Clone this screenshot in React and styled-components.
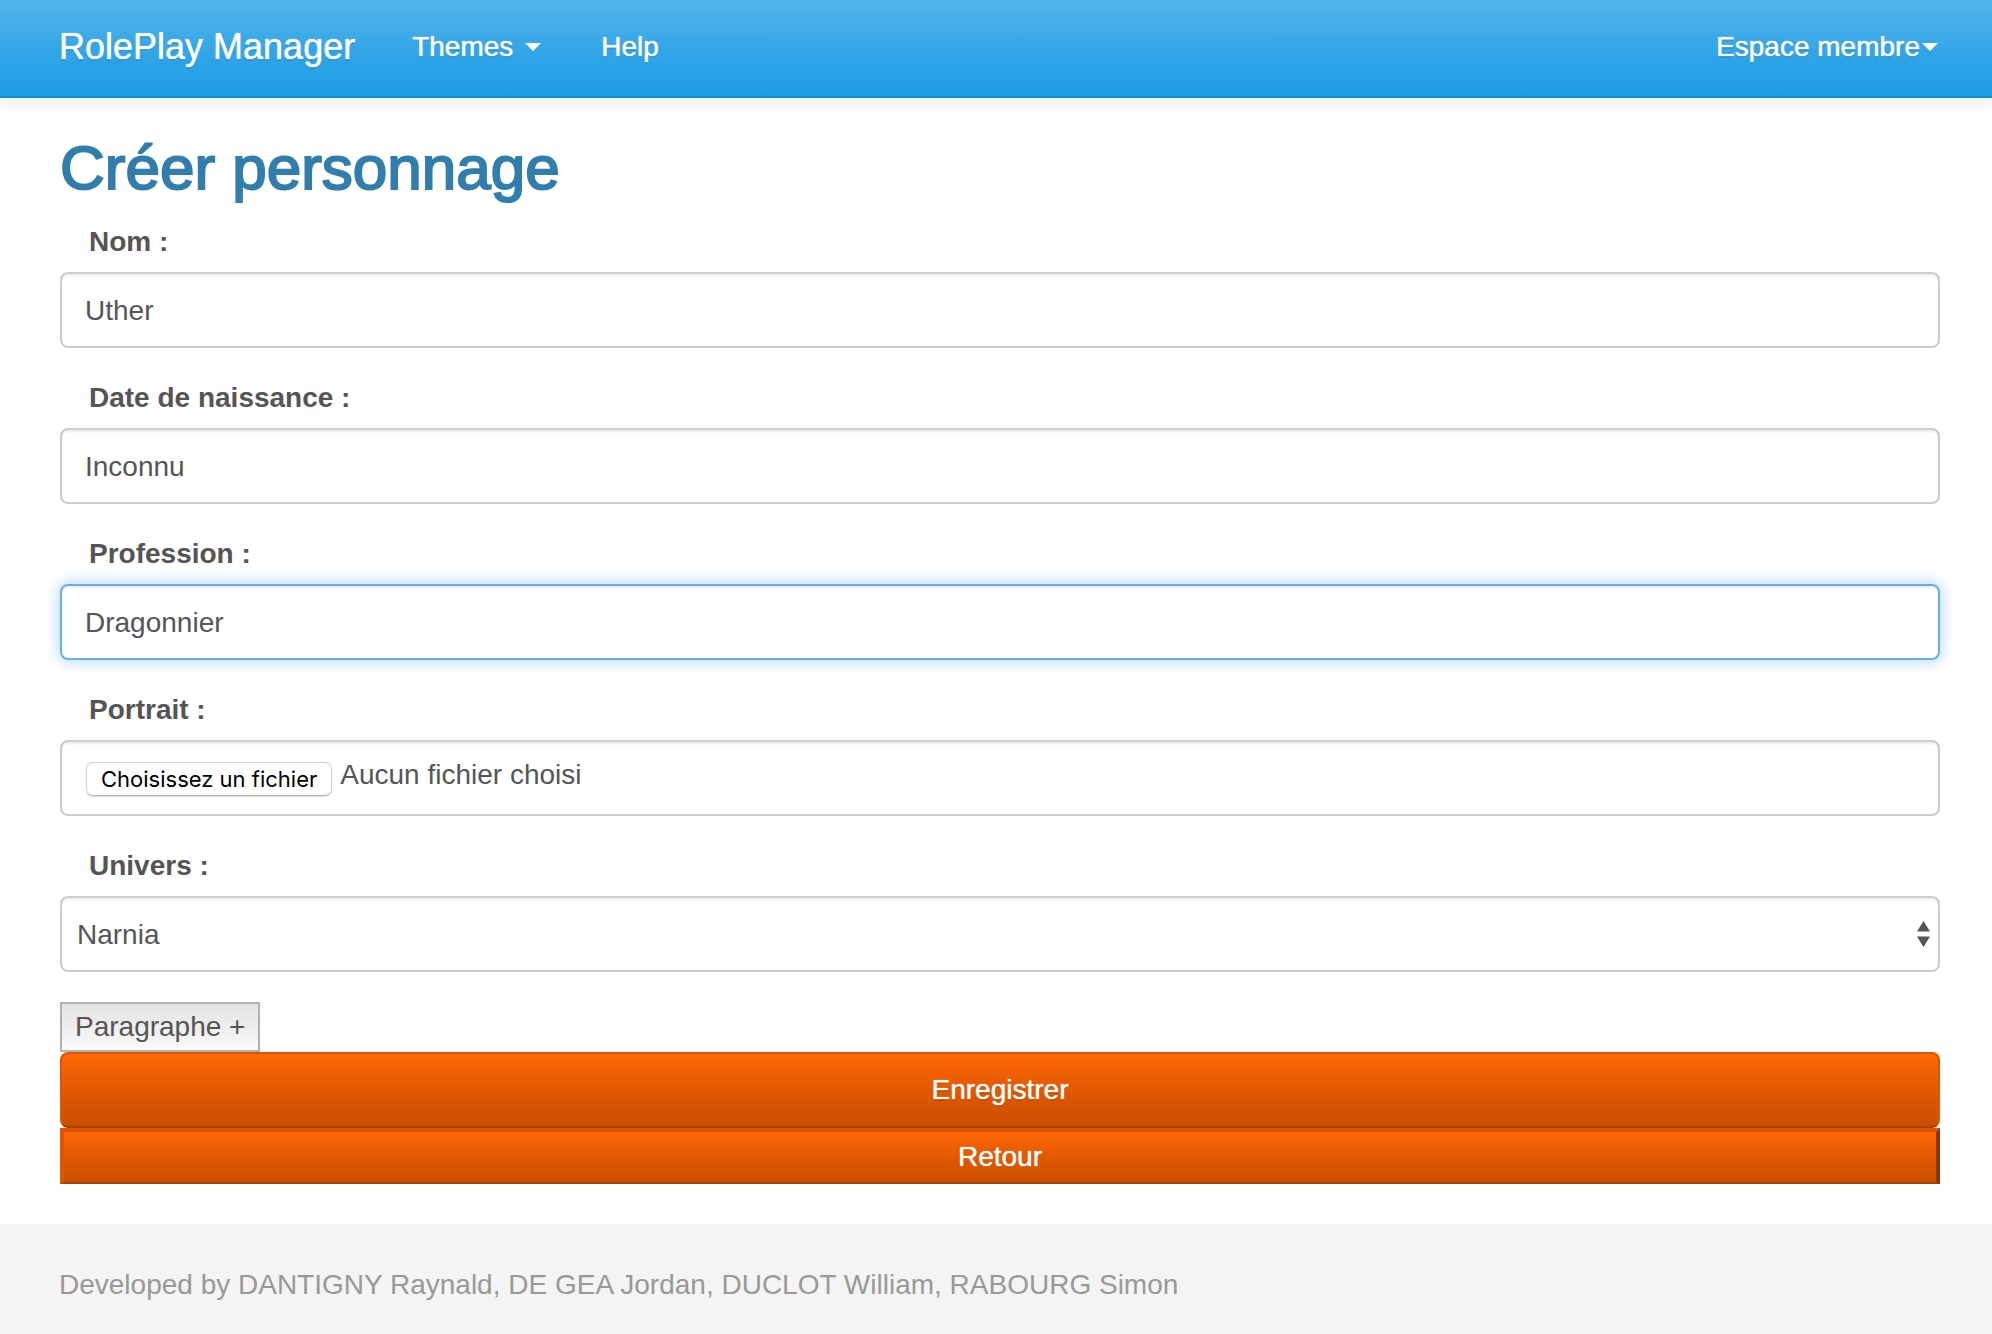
import React, { useState } from "react";
import styled, { createGlobalStyle, css } from "styled-components";

const GlobalStyle = createGlobalStyle`
  *, *::before, *::after { box-sizing: border-box; }
  body {
    margin: 0;
    background: #fff;
    color: #555;
    font: 28px/40px "Helvetica Neue", "Liberation Sans", Arial, sans-serif;
  }
  input, select, button { font: inherit; color: inherit; }
`;

const Page = styled.div`
  display: flex;
  flex-direction: column;
  min-height: 100vh;
`;

const Navbar = styled.nav`
  display: flex;
  align-items: center;
  height: 98px;
  padding: 0 54px 2px 59px;
  background-image: linear-gradient(#54b4eb, #2fa4e7 60%, #1d9ce5);
  border-bottom: 2px solid #178acc;
  box-shadow: 0 2px 20px rgba(0, 0, 0, 0.1);
`;

const Brand = styled.a`
  margin-right: 57px;
  color: #fff;
  font-size: 36px;
  text-decoration: none;
  text-shadow: 0 0 1px #fff, 0 2px 0 rgba(0, 0, 0, 0.1);
`;

const NavList = styled.ul`
  display: flex;
  flex: 1;
  gap: 60px;
  margin: 0;
  padding: 0;
  list-style: none;
`;

const NavItem = styled.li`
  margin-left: ${(p) => (p.$end ? "auto" : "0")};
`;

const NavLink = styled.a`
  display: flex;
  align-items: center;
  gap: ${(p) => p.$gap || 0}px;
  color: #fff;
  text-decoration: none;
  text-shadow: 0 0 1px #fff, 0 2px 0 rgba(0, 0, 0, 0.1);
`;

const Caret = styled.span`
  border: 8px solid transparent;
  border-top-color: #fff;
  border-bottom: 0;
`;

const Main = styled.main`
  padding: 30px 52px 40px 60px;
`;

const Title = styled.h1`
  margin: 0 0 14px;
  color: #317eac;
  font-size: 62px;
  font-weight: 400;
  line-height: 80px;
  -webkit-text-stroke: 2px #317eac;
`;

const Field = styled.div`
  margin-bottom: 30px;
`;

const Label = styled.label`
  display: block;
  margin-bottom: 10px;
  padding-left: 29px;
  font-weight: 700;
`;

const control = css`
  display: block;
  width: 100%;
  height: 76px;
  padding: 2px 23px 0;
  border: 2px solid #ccc;
  border-radius: 8px;
  outline: 0;
  background: #fff;
  box-shadow: inset 0 2px 2px rgba(0, 0, 0, 0.075);
`;

const focused = css`
  border-color: #66afe9;
  box-shadow: inset 0 2px 2px rgba(0, 0, 0, 0.075), 0 0 16px rgba(102, 175, 233, 0.6);
`;

const TextInput = styled.input`
  ${control}
  ${(p) => p.$active && focused}
  &:focus { ${focused} }
`;

const FileControl = styled.div`
  ${control}
  display: flex;
  align-items: flex-start;
  gap: 8px;
  padding: 13px 24px;
  &:focus-within { ${focused} }
`;

const FileInput = styled.input`
  position: absolute;
  width: 1px;
  height: 1px;
  opacity: 0;
`;

const FileButton = styled.label`
  margin-top: 7px;
  padding: 0 14px;
  border: 1px solid #d0d0d0;
  border-bottom-color: #b4b4b4;
  border-radius: 7px;
  box-shadow: 0 1px 1px rgba(0, 0, 0, 0.15);
  color: #000;
  font: 22px/32px Inter, Roboto, sans-serif;
`;

const SelectBox = styled.div`
  position: relative;
`;

const Select = styled.select`
  ${control}
  padding: 2px 15px 0;
  appearance: none;
  &:focus { ${focused} }
`;

const Arrows = styled.svg`
  position: absolute;
  top: 25px;
  right: 10px;
  pointer-events: none;
`;

const AddButton = styled.button`
  display: block;
  height: 50px;
  padding: 0 13px;
  border: 2px solid #b0b0b0;
  border-radius: 0;
  background: linear-gradient(#e2e2e2, #f9f9f9);
  line-height: 46px;
`;

const WideButton = styled.button`
  display: block;
  width: 100%;
  height: 76px;
  padding: 0 24px;
  border: 2px solid #dd5600;
  border-bottom-color: #a84100;
  border-radius: 8px;
  background: linear-gradient(#ff6707, #dd5600 60%, #c94e00) padding-box, #dd5600;
  color: #fff;
  text-shadow: 0 0 1px #fff, 0 2px 0 rgba(0, 0, 0, 0.1);
`;

const BackButton = styled(WideButton)`
  height: 56px;
  border-width: 4px 4px 2px;
  border-right-color: #8a3600;
  border-radius: 0;
  text-shadow: 0 0 1px #fff;
`;

const Footer = styled.footer`
  flex: 1;
  padding: 41px 59px 29px;
  background: #f4f4f4;
  color: #999;
`;

const textFields = [
  { id: "nom", label: "Nom :", value: "Uther" },
  { id: "naissance", label: "Date de naissance :", value: "Inconnu" },
  { id: "profession", label: "Profession :", value: "Dragonnier", active: true },
];

export default function App() {
  const [fileName, setFileName] = useState("Aucun fichier choisi");

  return (
    <Page>
      <GlobalStyle />
      <Navbar>
        <Brand href="#">RolePlay Manager</Brand>
        <NavList>
          <NavItem>
            <NavLink href="#" $gap={12}>Themes<Caret /></NavLink>
          </NavItem>
          <NavItem>
            <NavLink href="#">Help</NavLink>
          </NavItem>
          <NavItem $end>
            <NavLink href="#" $gap={2}>Espace membre<Caret /></NavLink>
          </NavItem>
        </NavList>
      </Navbar>
      <Main>
        <Title>Créer personnage</Title>
        <form onSubmit={(e) => e.preventDefault()}>
          {textFields.map((f) => (
            <Field key={f.id}>
              <Label htmlFor={f.id}>{f.label}</Label>
              <TextInput id={f.id} type="text" defaultValue={f.value} $active={f.active} />
            </Field>
          ))}
          <Field>
            <Label htmlFor="portrait">Portrait :</Label>
            <FileControl>
              <FileInput
                id="portrait"
                type="file"
                onChange={(e) => setFileName(e.target.files[0]?.name || "Aucun fichier choisi")}
              />
              <FileButton htmlFor="portrait">Choisissez un fichier</FileButton>
              <span>{fileName}</span>
            </FileControl>
          </Field>
          <Field>
            <Label htmlFor="univers">Univers :</Label>
            <SelectBox>
              <Select id="univers" defaultValue="Narnia">
                <option>Narnia</option>
              </Select>
              <Arrows width="13" height="26" viewBox="0 0 13 26" fill="#555" aria-hidden="true">
                <path d="M6.5 0 13 10.500H0ZM0 15.500H13L6.500 26Z" />
              </Arrows>
            </SelectBox>
          </Field>
          <AddButton type="button">Paragraphe +</AddButton>
          <WideButton type="submit">Enregistrer</WideButton>
          <BackButton type="button">Retour</BackButton>
        </form>
      </Main>
      <Footer>Developed by DANTIGNY Raynald, DE GEA Jordan, DUCLOT William, RABOURG Simon</Footer>
    </Page>
  );
}
